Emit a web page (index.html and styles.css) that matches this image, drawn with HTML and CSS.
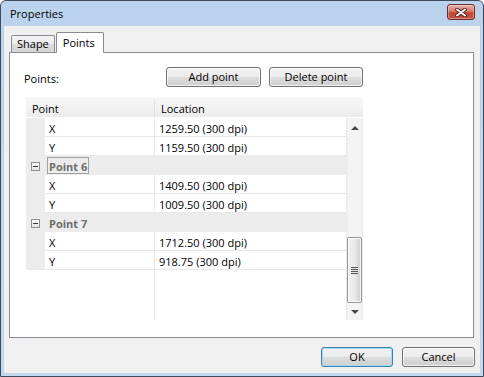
FILE: index.html
```html
<!DOCTYPE html>
<html lang="en">
<head>
    <meta charset="UTF-8">
    <title>Properties</title>
    <link rel="stylesheet" href="styles.css">
</head>
<body>
    <div class="window">
        <div class="titlebar">
            <span class="title">Properties</span>
            <button class="close" aria-label="Close">
                <svg width="12" height="9" viewBox="0 0 12 9">
                    <path d="M2 1.5 L10 7.5 M10 1.5 L2 7.5" stroke="#4a1a1a" stroke-width="3.6" stroke-linecap="round"/>
                    <path d="M2 1.5 L10 7.5 M10 1.5 L2 7.5" stroke="#ffffff" stroke-width="2" stroke-linecap="round"/>
                </svg>
            </button>
        </div>

        <div class="client">
            <div class="tabs">
                <div class="tab">Shape</div>
                <div class="tab active">Points</div>
            </div>

            <div class="panel">
                <div class="content">
                    <div class="toolbar">
                        <span class="label">Points:</span>
                        <div class="actions">
                            <button class="btn btn-add">Add point</button>
                            <button class="btn btn-delete">Delete point</button>
                        </div>
                    </div>

                    <div class="grid">
                        <div class="grid-head">
                            <div class="head-name">Point</div>
                            <div class="head-loc">Location</div>
                        </div>
                        <div class="grid-body">
                            <div class="rows">
                                <div class="row">
                                    <div class="gutter"></div>
                                    <div class="name">X</div>
                                    <div class="value">1259.50 (300 dpi)</div>
                                </div>
                                <div class="row">
                                    <div class="gutter"></div>
                                    <div class="name">Y</div>
                                    <div class="value">1159.50 (300 dpi)</div>
                                </div>
                                <div class="row group">
                                    <div class="gutter"><span class="expander"></span></div>
                                    <span class="group-label focused">Point 6</span>
                                </div>
                                <div class="row">
                                    <div class="gutter"></div>
                                    <div class="name">X</div>
                                    <div class="value">1409.50 (300 dpi)</div>
                                </div>
                                <div class="row">
                                    <div class="gutter"></div>
                                    <div class="name">Y</div>
                                    <div class="value">1009.50 (300 dpi)</div>
                                </div>
                                <div class="row group">
                                    <div class="gutter"><span class="expander"></span></div>
                                    <span class="group-label">Point 7</span>
                                </div>
                                <div class="row">
                                    <div class="gutter"></div>
                                    <div class="name">X</div>
                                    <div class="value">1712.50 (300 dpi)</div>
                                </div>
                                <div class="row">
                                    <div class="gutter"></div>
                                    <div class="name">Y</div>
                                    <div class="value">918.75 (300 dpi)</div>
                                </div>
                                <div class="filler">
                                    <div class="filler-left"></div>
                                </div>
                            </div>

                            <div class="scrollbar">
                                <div class="arrow arrow-up"></div>
                                <div class="track">
                                    <div class="thumb">
                                        <span class="grip"></span>
                                    </div>
                                </div>
                                <div class="arrow arrow-down"></div>
                            </div>
                        </div>
                    </div>
                </div>
            </div>

            <div class="footer">
                <button class="btn btn-ok">OK</button>
                <button class="btn btn-cancel">Cancel</button>
            </div>
        </div>
    </div>
</body>
</html>
```

FILE: styles.css
```css
:root {
    --frame-dark: #3f4b5c;
    --client-bg: #f0f0f0;
    --tab-border: #898c95;
    --row-gray: #ececec;
    --row-line: #e8e8e8;
    --text: #000000;
    --group-text: #6d6d6d;
}

* {
    margin: 0;
    padding: 0;
    box-sizing: border-box;
}

body {
    width: 484px;
    height: 377px;
    overflow: hidden;
    font-family: 'Open Sans', 'Noto Sans', sans-serif;
    font-size: 11px;
    color: var(--text);
    background: #ffffff;
}

button {
    font-family: inherit;
    font-size: inherit;
    color: inherit;
}

.window {
    width: 484px;
    height: 377px;
    border: 1px solid var(--frame-dark);
    border-radius: 6px 6px 0 0;
    background: linear-gradient(180deg, #bad2ec 0%, #c3d8ef 100%);
    padding: 0 3px 3px;
    display: flex;
    flex-direction: column;
}

/* title bar */

.titlebar {
    height: 25px;
    display: flex;
    align-items: flex-start;
    justify-content: space-between;
    padding: 0 5px 0 3px;
}

.title {
    padding: 6px 0 0 3px;
    line-height: 14px;
}

.close {
    width: 28px;
    height: 16px;
    margin-top: 3px;
    border: 1px solid #6b2c2c;
    border-radius: 3px;
    background: linear-gradient(180deg, #e6b1a9 0%, #d47a6c 45%, #c24734 55%, #c7523e 100%);
    box-shadow: inset 0 0 0 1px rgba(255, 255, 255, 0.35);
    display: flex;
    align-items: center;
    justify-content: center;
}

/* client area */

.client {
    flex: 1;
    background: var(--client-bg);
    padding: 6px 5px 6px 5px;
    display: flex;
    flex-direction: column;
}

.tabs {
    height: 20px;
    display: flex;
    align-items: flex-end;
    padding-left: 2px;
    position: relative;
    z-index: 1;
}

.tab {
    height: 17px;
    line-height: 16px;
    padding: 0 5px;
    border: 1px solid var(--tab-border);
    border-bottom: none;
    border-radius: 2px 2px 0 0;
    background: linear-gradient(180deg, #f3f3f3 0%, #ebebeb 50%, #dcdcdc 50%, #d5d5d5 100%);
}

.tab.active {
    height: 21px;
    line-height: 19px;
    margin-bottom: -1px;
    padding: 0 8px 0 6px;
    margin-left: 1px;
    background: #ffffff;
}

.panel {
    height: 286px;
    margin-right: 1px;
    border: 1px solid var(--tab-border);
    background: #ffffff;
    padding: 14px 0 0 14px;
}

.content {
    width: 339px;
}

.toolbar {
    height: 20px;
    display: flex;
    align-items: flex-start;
}

.label {
    padding-top: 2px;
    line-height: 19px;
}

.actions {
    margin-left: auto;
    display: flex;
    gap: 8px;
}

.btn {
    height: 20px;
    border: 1px solid #707070;
    border-radius: 3px;
    background: linear-gradient(180deg, #f2f2f2 0%, #ebebeb 50%, #dddddd 50%, #cfcfcf 100%);
    box-shadow: inset 0 0 0 1px rgba(255, 255, 255, 0.7);
    line-height: 18px;
    text-align: center;
}

.btn-add {
    width: 95px;
}

.btn-delete {
    width: 94px;
}

/* property grid */

.grid {
    margin: 10px 0 0 2px;
    width: 337px;
}

.grid-head {
    height: 21px;
    display: flex;
    background: linear-gradient(180deg, #f7f7f7 0%, #f1f1f1 60%, #ebebeb 100%);
    border-bottom: 1px solid #ffffff;
    padding-top: 2px;
    line-height: 19px;
}

.head-name {
    width: 129px;
    padding-left: 6px;
    border-right: 1px solid #e2e2e2;
}

.head-loc {
    padding-left: 6px;
}

.grid-body {
    height: 202px;
    display: flex;
}

.rows {
    flex: 1;
    display: flex;
    flex-direction: column;
}

.row {
    height: 19px;
    display: flex;
    flex-shrink: 0;
}

.gutter {
    width: 19px;
    flex-shrink: 0;
    background: var(--row-gray);
    display: flex;
    align-items: center;
    justify-content: center;
}

.name {
    width: 110px;
    padding: 2px 0 0 4px;
    line-height: 17px;
    border-right: 1px solid var(--row-line);
    border-bottom: 1px solid var(--row-line);
}

.value {
    flex: 1;
    padding: 2px 0 0 4px;
    line-height: 17px;
    border-bottom: 1px solid var(--row-line);
}

.row.group {
    background: var(--row-gray);
    align-items: center;
}

.expander {
    width: 9px;
    height: 9px;
    margin-top: 1px;
    border: 1px solid #919191;
    background: linear-gradient(180deg, #ffffff 0%, #e4e4e4 100%);
    display: flex;
    align-items: center;
    justify-content: center;
}

.expander::after {
    content: "";
    width: 5px;
    height: 1px;
    background: #3b3b3b;
}

.group-label {
    margin-left: 2px;
    padding: 0 1px;
    height: 17px;
    line-height: 17px;
    font-weight: bold;
    color: var(--group-text);
    border: 1px solid transparent;
}

.group-label.focused {
    border-color: #a0a0a0;
}

.filler {
    flex: 1;
    display: flex;
}

.filler-left {
    width: 129px;
    border-right: 1px solid var(--row-line);
}

/* scrollbar */

.scrollbar {
    width: 17px;
    display: flex;
    flex-direction: column;
    background: linear-gradient(90deg, #e8e8e8 0%, #f4f4f4 15%, #f4f4f4 85%, #e8e8e8 100%);
}

.arrow {
    height: 17px;
    display: flex;
    justify-content: center;
}

.arrow-up {
    align-items: flex-end;
    padding-bottom: 5px;
}

.arrow-up::after {
    content: "";
    border-left: 4px solid transparent;
    border-right: 4px solid transparent;
    border-bottom: 4px solid #4a4a4a;
}

.arrow-down {
    align-items: flex-start;
    padding-top: 7px;
}

.arrow-down::after {
    content: "";
    border-left: 4px solid transparent;
    border-right: 4px solid transparent;
    border-top: 4px solid #4a4a4a;
}

.track {
    flex: 1;
    padding: 0 1px;
}

.thumb {
    margin-top: 102px;
    height: 66px;
    border: 1px solid #979797;
    border-radius: 2px;
    background: linear-gradient(90deg, #f2f2f2 0%, #e9e9e9 50%, #d8d8d8 80%, #cfcfcf 100%);
    box-shadow: inset 0 0 0 1px rgba(255, 255, 255, 0.8);
    display: flex;
    align-items: center;
    justify-content: center;
}

.grip {
    width: 7px;
    height: 7px;
    background: repeating-linear-gradient(180deg, #555555 0, #555555 1px, #e8e8e8 1px, #e8e8e8 2px);
}

/* footer */

.footer {
    margin-top: 9px;
    display: flex;
    justify-content: flex-end;
    gap: 9px;
}

.btn-ok {
    width: 72px;
    border-color: #3c7fb1;
    box-shadow: inset 0 0 0 1px #9fdcf6;
}

.btn-cancel {
    width: 73px;
}
```
